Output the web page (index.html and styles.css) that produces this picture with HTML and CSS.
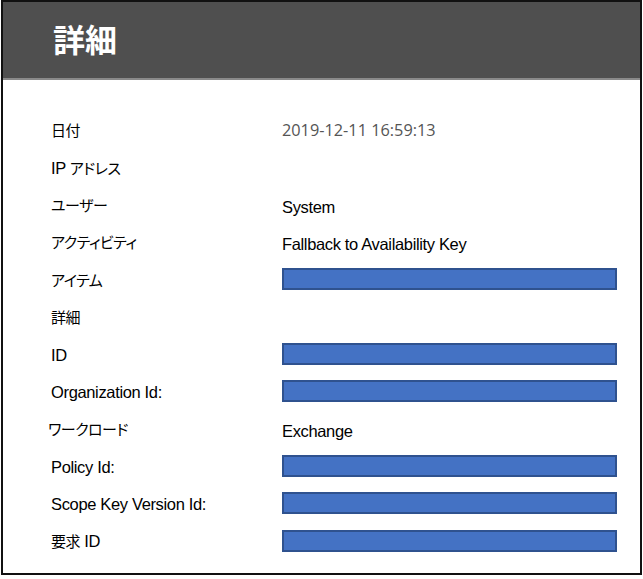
FILE: index.html
```html
<!DOCTYPE html>
<html lang="ja">
<head>
<meta charset="utf-8">
<title>詳細</title>
<link rel="stylesheet" href="styles.css">
</head>
<body>
<div class="frame">
  <header class="head"><h1 class="title">詳細</h1></header>
  <div class="rows">
    <div class="label jp">日付</div><div class="value date">2019-12-11 16:59:13</div>
    <div class="label"><span>IP</span> <span class="jp">アドレス</span></div><div class="value"></div>
    <div class="label jp">ユーザー</div><div class="value text">System</div>
    <div class="label jp">アクティビティ</div><div class="value text">Fallback to Availability Key</div>
    <div class="label jp">アイテム</div><div class="value"><div class="bar"></div></div>
    <div class="label jp">詳細</div><div class="value"></div>
    <div class="label latin">ID</div><div class="value"><div class="bar"></div></div>
    <div class="label latin">Organization Id:</div><div class="value"><div class="bar"></div></div>
    <div class="label jp shift">ワークロード</div><div class="value text">Exchange</div>
    <div class="label latin">Policy Id:</div><div class="value"><div class="bar"></div></div>
    <div class="label latin">Scope Key Version Id:</div><div class="value"><div class="bar"></div></div>
    <div class="label"><span class="jp">要求</span> ID</div><div class="value"><div class="bar"></div></div>
  </div>
</div>
</body>
</html>
```
FILE: styles.css
```css
html, body {
  margin: 0;
  padding: 0;
  background: #ffffff;
}
body {
  font-family: "Liberation Sans", Arial, sans-serif;
  color: #000;
}
.frame {
  box-sizing: border-box;
  margin-left: 1px;
  width: 641px;
  height: 575px;
  border: 2px solid #111;
  background: #fff;
}
.head {
  box-sizing: border-box;
  height: 78px;
  background: #4f4f4f;
  border-bottom: 2px solid #8a8a8a;
  display: flex;
  align-items: center;
  padding-left: 50px;
  padding-bottom: 5px;
}
.title {
  margin: 0;
  color: #fff;
  font-family: "Noto Sans CJK JP", sans-serif;
  font-size: 32px;
  font-weight: 700;
  line-height: 1;
  letter-spacing: 0;
}
.rows {
  display: grid;
  grid-template-columns: 232px 335px;
  grid-auto-rows: 37.36px;
  padding: 31px 0 0 47px;
  align-items: center;
}
.label {
  font-size: 16.5px;
  letter-spacing: -0.35px;
  padding-left: 1px;
  white-space: nowrap;
}
.label.latin {
  padding-top: 3px;
}
.jp {
  font-family: "Noto Sans CJK JP", sans-serif;
  font-weight: 400;
  font-size: 15px;
  font-feature-settings: "palt";
  letter-spacing: -0.5px;
}
.label.shift {
  margin-left: -3px;
}
.value {
  font-size: 16.5px;
  letter-spacing: -0.35px;
  white-space: nowrap;
}
.value.text {
  padding-top: 6px;
}
.date {
  font-family: "Open Sans", sans-serif;
  font-size: 16.3px;
  letter-spacing: 0;
  color: #555;
}
.bar {
  box-sizing: border-box;
  height: 22px;
  width: 335px;
  background: #4472c4;
  border: 2px solid #2f528f;
}
```
